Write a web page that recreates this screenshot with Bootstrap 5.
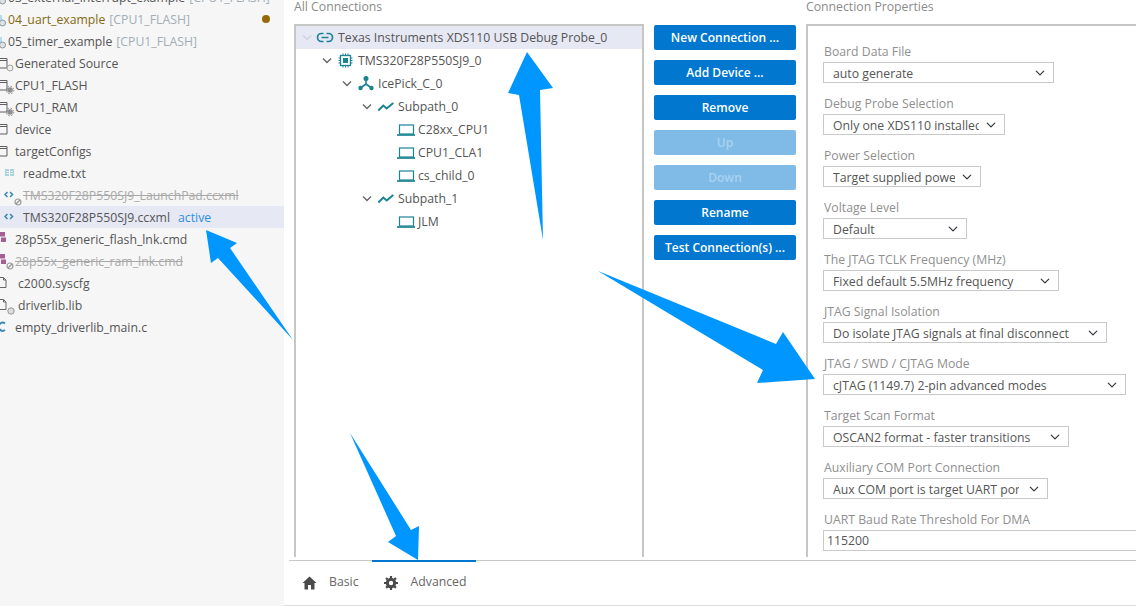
<!DOCTYPE html>
<html lang="en">
<head>
<meta charset="utf-8">
<title>Target configuration</title>
<link rel="stylesheet" href="https://cdn.jsdelivr.net/npm/bootstrap@5.3.0/dist/css/bootstrap.min.css">
<style>
html,body{height:606px;overflow:hidden}
body{background:#fff;font-family:"Open Sans","Noto Sans",sans-serif;font-size:12.25px;color:#555;position:relative}
svg{flex:none;display:block;overflow:visible}
.shell{height:606px}
.side{width:284px;flex:none;background:#f6f6f6;overflow:hidden}
.side-list{margin-top:-14px}
.side-row{height:22px;line-height:24px;white-space:nowrap}
.side-row.sel{background:#e6e8f4}
.tag{color:#a3adb5;margin-left:4px}
.gold{color:#85690f}
.dot{width:8px;height:8px;border-radius:50%;background:#94690a;margin-left:auto;margin-right:14px;align-self:center}
.act{color:#2b8fe3;margin-left:8px}
.off{color:#a9a9a9;text-decoration:line-through}
.work{min-width:0}
.top-area{height:560px;padding-left:10px}
.cap{height:24px;line-height:14px;color:#8b8b8b}
.col-tree{width:350px;flex:none;margin-right:10px}
.col-btn{width:142px;flex:none;margin-right:10px;padding-top:25px;row-gap:10px}
.col-prop{flex:1;min-width:0}
.pane{height:533px;border:2px solid #c6c6c6;border-bottom:0;overflow:hidden}
.pane-r{border-right:0;padding:15px 0 0 15px}
.tree-row{height:23px;line-height:23px;white-space:nowrap}
.tree-row.sel{background:#e6e8f4}
.chev{width:15px;height:23px}
.tico{width:22px;height:23px}
.l0{padding-left:5px}.l1{padding-left:25px}.l2{padding-left:45px}.l3{padding-left:65px}.l4{padding-left:85px}
.act-btn{height:25px;padding:0;font-size:12px;font-weight:600;line-height:25px;color:#fff;background:#0277cf;border:0;border-radius:2px}
.act-btn:disabled{background:#80bbe7;color:#a8d2f1;opacity:1}
.fld-lab{height:21px;line-height:21px;margin:0;padding-left:1px;color:#8f8f8f}
.fld{height:21px;min-height:0;padding:2px 25px 0 9px;font-size:12.25px;line-height:17px;color:#555;border:1px solid #c9c9c9;border-radius:0;background-position:right 7px center;background-size:12px 10px;margin-bottom:10px}
.w1{width:231px}.w2{width:182px}.w3{width:158px}.w4{width:144px}.w5{width:236px}.w6{width:284px}.w7{width:303px}.w8{width:246px}.w9{width:225px;padding-right:28px}
.fld-in{height:21px;min-height:0;width:340px;padding:0 3px;font-size:12.25px;color:#555;border:1px solid #c9c9c9;border-radius:0}
.tabs-wrap{height:46px;padding-left:5px;border-bottom:1px solid #dcdcdc}
.tabs{height:45px;border-top:1px solid #c9c9c9}
.tab-i{height:45px;color:#666;padding:0 13px 2px 13px;margin-top:-1px;border-top:2px solid transparent;gap:12px}
.tab-i.on{border-top-color:#0277cf;padding:0 10px 2px 12px;gap:13px}
.tab-i:hover{color:#666}
.arrows{position:absolute;left:0;top:0;width:1136px;height:606px;pointer-events:none}
</style>
</head>
<body>
<svg width="0" height="0" class="position-absolute">
  <defs>
    <g id="i-prj"><path d="M1 7v5" stroke="#9fd4ea" stroke-width="1.500"/><circle cx="2.500" cy="15" r="3" fill="#dfe3e6" stroke="#8b979e"/></g>
    <g id="i-fold"><path d="M0 6.500H7V16H-1" fill="none" stroke="#5f5f5f"/><path d="M0 8.500H7" stroke="#5f5f5f"/></g>
    <g id="i-file"><path d="M-1 5.500H3.500L6 8V15.500H-1" fill="none" stroke="#666"/><path d="M3.500 5.500V8H6" fill="none" stroke="#666"/></g>
    <g id="i-xml"><path d="M7.500 8L5 10.500 7.500 13M10 8L12.500 10.500 10 13" fill="none" stroke="#3b87b5" stroke-width="1.500"/></g>
    <g id="i-no"><circle cx="0" cy="0" r="3" fill="none" stroke="#999" stroke-width="1.200"/><path d="M-2 2L2 -2" stroke="#999" stroke-width="1.200"/></g>
    <g id="i-gear"><circle cx="0" cy="0" r="2.800" fill="#8e8e8e"/><circle cx="0" cy="0" r="3.800" fill="none" stroke="#8e8e8e" stroke-dasharray="1.500 1.500"/></g>
    <g id="i-cmd"><rect x="0" y="4" width="5" height="4.500" fill="#a45f95"/><rect x="1" y="9.500" width="5" height="4.500" fill="#a45f95"/></g>
    <path id="t-chev" d="M-4 -2L0 2 4 -2" fill="none" stroke-width="1.400"/>
    <g id="t-lap" fill="none" stroke="#1b8494"><rect x="3.500" y="-4.500" width="14" height="9" stroke-width="1.200"/><path d="M1 5.500H19" stroke-width="1.700"/></g>
    <g id="t-path" fill="none" stroke="#1b8494" stroke-width="2"><path d="M2.300 4L7.300 -1 10.700 2 17.300 -3.500"/></g>
  </defs>
</svg>
<div class="shell d-flex">
  <aside class="side">
    <div class="side-list">
      <div class="side-row d-flex"><svg width="8" height="22"><use href="#i-prj"/></svg><span>03_external_interrupt_example</span><span class="tag">[CPU1_FLASH]</span></div>
      <div class="side-row d-flex"><svg width="8" height="22"><use href="#i-prj"/></svg><span class="gold">04_uart_example</span><span class="tag">[CPU1_FLASH]</span><span class="dot"></span></div>
      <div class="side-row d-flex"><svg width="8" height="22"><use href="#i-prj"/></svg><span>05_timer_example</span><span class="tag">[CPU1_FLASH]</span></div>
      <div class="side-row d-flex"><svg width="15" height="22"><use href="#i-fold"/><circle cx="10" cy="16" r="3" fill="#eee" stroke="#a0a0a0"/></svg><span>Generated Source</span></div>
      <div class="side-row d-flex"><svg width="15" height="22"><use href="#i-fold"/><use href="#i-gear" x="10" y="16"/></svg><span>CPU1_FLASH</span></div>
      <div class="side-row d-flex"><svg width="15" height="22"><use href="#i-fold"/><use href="#i-gear" x="10" y="16"/></svg><span>CPU1_RAM</span></div>
      <div class="side-row d-flex"><svg width="15" height="22"><use href="#i-fold"/></svg><span>device</span></div>
      <div class="side-row d-flex"><svg width="15" height="22"><use href="#i-fold"/></svg><span>targetConfigs</span></div>
      <div class="side-row d-flex"><svg width="23" height="22"><rect x="5" y="7" width="9" height="7" fill="#a9d3dd"/><path d="M9.500 7V14M6.500 9.500H8.500M6.500 11.500H8.500M10.500 9.500H12.500M10.500 11.500H12.500" stroke="#fff"/></svg><span>readme.txt</span></div>
      <div class="side-row d-flex"><svg width="23" height="22"><use href="#i-xml"/><use href="#i-no" x="18" y="18"/></svg><span class="off">TMS320F28P550SJ9_LaunchPad.ccxml</span></div>
      <div class="side-row sel d-flex"><svg width="23" height="22"><use href="#i-xml"/></svg><span>TMS320F28P550SJ9.ccxml</span><span class="act">active</span></div>
      <div class="side-row d-flex"><svg width="15" height="22"><use href="#i-cmd"/></svg><span>28p55x_generic_flash_lnk.cmd</span></div>
      <div class="side-row d-flex"><svg width="15" height="22"><use href="#i-cmd"/><use href="#i-no" x="10" y="16"/></svg><span class="off">28p55x_generic_ram_lnk.cmd</span></div>
      <div class="side-row d-flex"><svg width="18" height="22"><use href="#i-file"/></svg><span>c2000.syscfg</span></div>
      <div class="side-row d-flex"><svg width="18" height="22"><use href="#i-file"/><circle cx="11" cy="17" r="3.200" fill="#ddd" stroke="#999"/></svg><span>driverlib.lib</span></div>
      <div class="side-row d-flex"><svg width="15" height="22"><path d="M5 7.500A4 4 0 1 0 5 14" fill="none" stroke="#3b87b5" stroke-width="2"/></svg><span>empty_driverlib_main.c</span></div>
    </div>
  </aside>
  <main class="work flex-grow-1 d-flex flex-column">
    <div class="top-area d-flex">
      <section class="col-tree">
        <div class="cap">All Connections</div>
        <div class="pane">
          <div class="tree-row sel l0 d-flex"><svg class="chev"><use href="#t-chev" x="6" y="11.500" stroke="#d2d5de"/></svg><svg class="tico"><g fill="none" stroke="#1b8494" stroke-width="1.700"><path d="M7.500 7.500H5.500A4 4 0 0 0 5.500 15.500H7.500M10.500 7.500H12.500A4 4 0 0 1 12.500 15.500H10.500M5.500 11.500H12.500"/></g></svg><span>Texas Instruments XDS110 USB Debug Probe_0</span></div>
          <div class="tree-row l1 d-flex"><svg class="chev"><use href="#t-chev" x="6" y="11.500" stroke="#666"/></svg><svg class="tico"><g fill="none" stroke="#1b8494"><rect x="4.500" y="6.500" width="10" height="10" stroke-width="1.300"/><rect x="7.500" y="9.500" width="4" height="4" fill="#1b8494"/><path d="M7 4.500V6.500M9.500 4.500V6.500M12 4.500V6.500M7 16.500V18.500M9.500 16.500V18.500M12 16.500V18.500M2.500 9H4.500M2.500 11.500H4.500M2.500 14H4.500M14.500 9H16.500M14.500 11.500H16.500M14.500 14H16.500"/></g></svg><span>TMS320F28P550SJ9_0</span></div>
          <div class="tree-row l2 d-flex"><svg class="chev"><use href="#t-chev" x="6" y="11.500" stroke="#666"/></svg><svg class="tico"><g fill="#1b8494"><circle cx="10" cy="6.500" r="2.500"/><circle cx="4.500" cy="16" r="2.200"/><circle cx="15.500" cy="16" r="2.200"/><path d="M10 6.500V12L4.500 16M10 12L15.500 16" fill="none" stroke="#1b8494" stroke-width="1.600"/></g></svg><span>IcePick_C_0</span></div>
          <div class="tree-row l3 d-flex"><svg class="chev"><use href="#t-chev" x="6" y="11.500" stroke="#666"/></svg><svg class="tico"><use href="#t-path" y="11.500"/></svg><span>Subpath_0</span></div>
          <div class="tree-row l4 d-flex"><span class="chev"></span><svg class="tico"><use href="#t-lap" y="11.500"/></svg><span>C28xx_CPU1</span></div>
          <div class="tree-row l4 d-flex"><span class="chev"></span><svg class="tico"><use href="#t-lap" y="11.500"/></svg><span>CPU1_CLA1</span></div>
          <div class="tree-row l4 d-flex"><span class="chev"></span><svg class="tico"><use href="#t-lap" y="11.500"/></svg><span>cs_child_0</span></div>
          <div class="tree-row l3 d-flex"><svg class="chev"><use href="#t-chev" x="6" y="11.500" stroke="#666"/></svg><svg class="tico"><use href="#t-path" y="11.500"/></svg><span>Subpath_1</span></div>
          <div class="tree-row l4 d-flex"><span class="chev"></span><svg class="tico"><use href="#t-lap" y="11.500"/></svg><span>JLM</span></div>
        </div>
      </section>
      <section class="col-btn d-grid align-content-start">
        <button type="button" class="btn act-btn">New Connection ...</button>
        <button type="button" class="btn act-btn">Add Device ...</button>
        <button type="button" class="btn act-btn">Remove</button>
        <button type="button" class="btn act-btn" disabled>Up</button>
        <button type="button" class="btn act-btn" disabled>Down</button>
        <button type="button" class="btn act-btn">Rename</button>
        <button type="button" class="btn act-btn">Test Connection(s) ...</button>
      </section>
      <section class="col-prop">
        <div class="cap">Connection Properties</div>
        <div class="pane pane-r">
          <label class="fld-lab d-block">Board Data File</label>
          <select class="form-select fld w1"><option>auto generate</option></select>
          <label class="fld-lab d-block">Debug Probe Selection</label>
          <select class="form-select fld w2"><option>Only one XDS110 installed</option></select>
          <label class="fld-lab d-block">Power Selection</label>
          <select class="form-select fld w3"><option>Target supplied power</option></select>
          <label class="fld-lab d-block">Voltage Level</label>
          <select class="form-select fld w4"><option>Default</option></select>
          <label class="fld-lab d-block">The JTAG TCLK Frequency (MHz)</label>
          <select class="form-select fld w5"><option>Fixed default 5.5MHz frequency</option></select>
          <label class="fld-lab d-block">JTAG Signal Isolation</label>
          <select class="form-select fld w6"><option>Do isolate JTAG signals at final disconnect</option></select>
          <label class="fld-lab d-block">JTAG / SWD / CJTAG Mode</label>
          <select class="form-select fld w7"><option>cJTAG (1149.7) 2-pin advanced modes</option></select>
          <label class="fld-lab d-block">Target Scan Format</label>
          <select class="form-select fld w8"><option>OSCAN2 format - faster transitions</option></select>
          <label class="fld-lab d-block">Auxiliary COM Port Connection</label>
          <select class="form-select fld w9"><option>Aux COM port is target UART port</option></select>
          <label class="fld-lab d-block">UART Baud Rate Threshold For DMA</label>
          <input class="form-control fld-in" value="115200">
        </div>
      </section>
    </div>
    <div class="tabs-wrap">
      <nav class="tabs nav">
        <a class="nav-link tab-i d-flex align-items-center" href="#"><svg width="15" height="14" viewBox="0 0 15 14"><path d="M7.500 0.500L0.500 7H2.500V13.500H6V9H9V13.500H12.500V7H14.500Z" fill="#4a4a4a"/></svg><span>Basic</span></a>
        <a class="nav-link tab-i on d-flex align-items-center" href="#"><svg width="14" height="14" viewBox="0 0 14 14"><circle cx="7" cy="7" r="3.700" fill="none" stroke="#4a4a4a" stroke-width="3"/><path d="M7 0V14M0 7H14M2 2L12 12M12 2L2 12" stroke="#4a4a4a" stroke-width="2.200" stroke-dasharray="2.200 9.600 2.200 9.600"/></svg><span>Advanced</span></a>
      </nav>
    </div>
  </main>
</div>
<svg class="arrows" viewBox="0 0 1136 606">
  <g fill="#0096ff">
    <polygon points="206,230 237,243 230,248 293,340 218,258 211,263"/>
    <polygon points="527,52 553,88 540,90 543,240 519,95 508,93"/>
    <polygon points="598,271 776,344 783,332 815,379 757,383 763,370"/>
    <polygon points="350,433 411,530 419,526 418,560 388,542 396,536"/>
  </g>
</svg>
<script src="https://cdn.jsdelivr.net/npm/bootstrap@5.3.0/dist/js/bootstrap.bundle.min.js"></script>
</body>
</html>
